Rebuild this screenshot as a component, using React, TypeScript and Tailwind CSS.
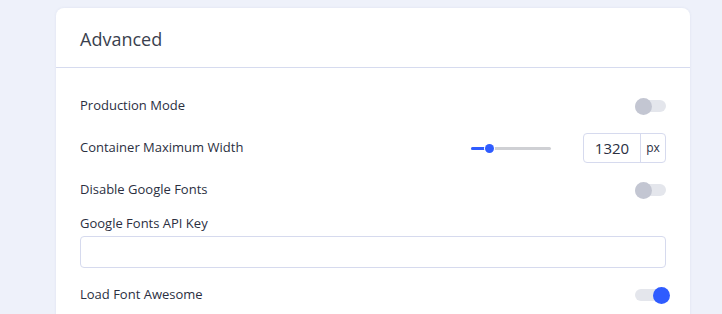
const font = { fontFamily: '"Segoe UI", "Open Sans", "Noto Sans", sans-serif' };

function Toggle({ on }: { on?: boolean }) {
  return (
    <div className="relative w-[31px] h-[18px] flex items-center">
      <div className="w-[31px] h-[12px] rounded-full bg-[#e4e6ec]" />
      <div
        className={
          on
            ? "absolute left-[18px] w-[17px] h-[17px] rounded-full bg-[#2f5cff]"
            : "absolute left-0 w-[17px] h-[17px] rounded-full bg-[#c3c6d2]"
        }
      />
    </div>
  );
}

function Row({ label, children }: { label: string; children: React.ReactNode }) {
  return (
    <div className="h-[30px] flex items-center justify-between">
      <span className="text-[13px] text-[#2b2f3f]">{label}</span>
      {children}
    </div>
  );
}

export default function App() {
  return (
    <div className="w-[722px] h-[314px] overflow-hidden bg-[#eef1fa] pl-[56px] pr-[32px] pt-2" style={font}>
      <div className="bg-white rounded-lg h-[400px] shadow-[0_0_3px_rgba(40,60,120,0.08)]">
        <div className="h-[60px] px-6 pt-[3px] flex items-center border-b border-[#d6dbef]">
          <h2 className="text-[18px] text-[#3a3f4e]">Advanced</h2>
        </div>
        <div className="pl-6 pr-[24px] pt-[23px] flex flex-col">
          <Row label="Production Mode">
            <Toggle />
          </Row>
          <div className="mt-3">
            <Row label="Container Maximum Width">
              <div className="flex items-center gap-8">
                <div className="relative w-[80px] h-[10px] flex items-center">
                  <div className="w-full h-[3px] rounded bg-[#cfd0d4]" />
                  <div className="absolute left-0 w-[18px] h-[3px] rounded bg-[#2f5cff]" />
                  <div className="absolute left-[14px] w-[9px] h-[9px] rounded-full bg-[#2f5cff] ring-1 ring-white" />
                </div>
                <div className="flex h-[30px] w-[83px] border border-[#d6daee] rounded">
                  <div className="w-[56px] flex items-center justify-center text-[15px] text-[#2b2f3f]">1320</div>
                  <div className="flex-1 border-l border-[#d6daee] flex items-center justify-center text-[12px] text-[#2b2f3f]">px</div>
                </div>
              </div>
            </Row>
          </div>
          <div className="mt-3">
            <Row label="Disable Google Fonts">
              <Toggle />
            </Row>
          </div>
          <div className="mt-[9px] flex flex-col">
            <label className="text-[13px] text-[#2b2f3f] leading-[18px]">Google Fonts API Key</label>
            <input className="mt-[4px] h-[32px] w-full border border-[#d6daee] rounded outline-none px-2 text-[13px]" />
          </div>
          <div className="mt-[12px]">
            <Row label="Load Font Awesome">
              <Toggle on />
            </Row>
          </div>
        </div>
      </div>
    </div>
  );
}
